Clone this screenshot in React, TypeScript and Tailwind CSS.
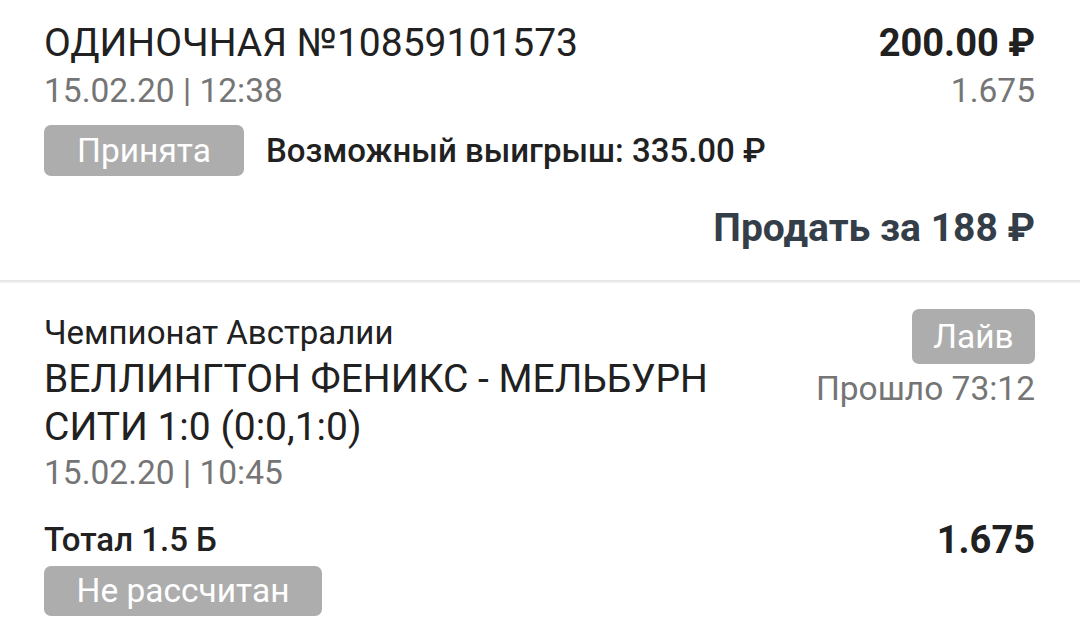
export default function App() {
  return (
    <div className="w-[1080px] h-[637px] overflow-hidden bg-white font-['Roboto',sans-serif] text-[#212121]">
      {/* Bet header */}
      <div className="pl-[44px] pr-[45px] pt-[20px] pb-[30px]">
        <div className="flex justify-between items-baseline">
          <div className="text-[39px] leading-[46px]">ОДИНОЧНАЯ №10859101573</div>
          <div className="text-[38px] leading-[46px] font-bold">200.00 ₽</div>
        </div>
        <div className="flex justify-between items-baseline mt-[5px] text-[33.5px] leading-[40px] text-[#757575]">
          <div>15.02.20 | 12:38</div>
          <div>1.675</div>
        </div>
        <div className="flex items-center gap-[22px] mt-[14px]">
          <div className="h-[51px] w-[200px] rounded-[7px] bg-[#adadad] text-white text-[33.5px] leading-[51px] text-center">
            Принята
          </div>
          <div className="text-[33px] font-medium">Возможный выигрыш: 335.00 ₽</div>
        </div>
        <div className="flex justify-end mt-[30px]">
          <div className="text-[39px] leading-[44px] font-bold text-[#343e48]">Продать за 188 ₽</div>
        </div>
      </div>

      <div className="h-[3px] bg-gradient-to-b from-[#e2e2e2] to-[#f4f4f4]" />

      {/* Event */}
      <div className="pl-[44px] pr-[45px] pt-[26px]">
        <div className="flex justify-between items-start gap-[24px]">
          <div className="flex-1">
            <div className="text-[33px] leading-[38px] mt-[5px]">Чемпионат Австралии</div>
            <div className="text-[39px] leading-[48px] mt-[3px]">
              ВЕЛЛИНГТОН ФЕНИКС - МЕЛЬБУРН СИТИ 1:0 (0:0,1:0)
            </div>
            <div className="text-[33.5px] leading-[40px] text-[#757575] mt-[2px]">15.02.20 | 10:45</div>
          </div>
          <div className="flex flex-col items-end shrink-0">
            <div className="h-[55px] w-[123px] rounded-[7px] bg-[#adadad] text-white text-[33.5px] leading-[55px] text-center">
              Лайв
            </div>
            <div className="text-[33.5px] leading-[40px] text-[#757575] mt-[5px]">Прошло 73:12</div>
          </div>
        </div>
        <div className="flex justify-between items-center mt-[25px]">
          <div className="text-[33px] leading-[38px] font-medium">Тотал 1.5 Б</div>
          <div className="text-[38px] leading-[44px] font-bold">1.675</div>
        </div>
        <div className="mt-[4px] h-[50px] w-[278px] rounded-[7px] bg-[#adadad] text-white text-[33.5px] leading-[50px] text-center">
          Не рассчитан
        </div>
      </div>
    </div>
  );
}
